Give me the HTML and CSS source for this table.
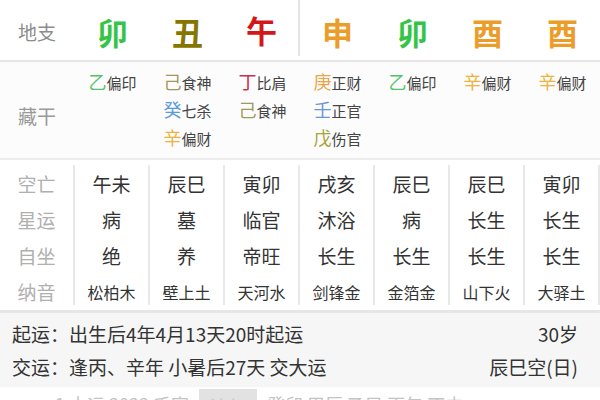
FILE: index.html
```html
<!DOCTYPE html>
<html lang="zh">
<head>
<meta charset="utf-8">
<link rel="stylesheet" href="styles.css">
</head>
<body>
<div class="page">
  <div class="row branches">
    <div class="label">地支</div>
    <div class="big green">卯</div>
    <div class="big olive">丑</div>
    <div class="big red split">午</div>
    <div class="big orange">申</div>
    <div class="big green">卯</div>
    <div class="big orange">酉</div>
    <div class="big orange">酉</div>
  </div>

  <div class="row hidden">
    <div class="label hidden-label">藏干</div>
    <div class="stems">
      <div class="stem"><span class="s s-yi">乙</span>偏印</div>
    </div>
    <div class="stems">
      <div class="stem"><span class="s s-ji">己</span>食神</div>
      <div class="stem"><span class="s s-gui">癸</span>七杀</div>
      <div class="stem"><span class="s s-xin">辛</span>偏财</div>
    </div>
    <div class="stems">
      <div class="stem"><span class="s s-ding">丁</span>比肩</div>
      <div class="stem"><span class="s s-ji">己</span>食神</div>
    </div>
    <div class="stems">
      <div class="stem"><span class="s s-geng">庚</span>正财</div>
      <div class="stem"><span class="s s-ren">壬</span>正官</div>
      <div class="stem"><span class="s s-wu">戊</span>伤官</div>
    </div>
    <div class="stems">
      <div class="stem"><span class="s s-yi">乙</span>偏印</div>
    </div>
    <div class="stems">
      <div class="stem"><span class="s s-xin">辛</span>偏财</div>
    </div>
    <div class="stems">
      <div class="stem"><span class="s s-xin">辛</span>偏财</div>
    </div>
  </div>

  <div class="row info">
    <div class="col labels">
      <div class="cell">空亡</div>
      <div class="cell">星运</div>
      <div class="cell">自坐</div>
      <div class="cell">纳音</div>
    </div>
    <div class="col"><div class="cell">午未</div><div class="cell">病</div><div class="cell">绝</div><div class="cell small">松柏木</div></div>
    <div class="col"><div class="cell">辰巳</div><div class="cell">墓</div><div class="cell">养</div><div class="cell small">壁上土</div></div>
    <div class="col"><div class="cell">寅卯</div><div class="cell">临官</div><div class="cell">帝旺</div><div class="cell small">天河水</div></div>
    <div class="col"><div class="cell">戌亥</div><div class="cell">沐浴</div><div class="cell">长生</div><div class="cell small">剑锋金</div></div>
    <div class="col"><div class="cell">辰巳</div><div class="cell">病</div><div class="cell">长生</div><div class="cell small">金箔金</div></div>
    <div class="col"><div class="cell">辰巳</div><div class="cell">长生</div><div class="cell">长生</div><div class="cell small">山下火</div></div>
    <div class="col"><div class="cell">寅卯</div><div class="cell">长生</div><div class="cell">长生</div><div class="cell small">大驿土</div></div>
  </div>

  <div class="luck">
    <div class="line"><span>起运：出生后4年4月13天20时起运</span><span>30岁</span></div>
    <div class="line"><span>交运：逢丙、辛年 小暑后27天 交大运</span><span>辰巳空(日)</span></div>
  </div>

  <div class="peek">
    <span class="peek-text">1 大运 2022 壬寅</span>
    <span class="peek-box">流年</span>
    <span class="peek-text">癸卯 甲辰 乙巳 丙午 丁未</span>
  </div>
</div>
</body>
</html>
```

FILE: styles.css
```css
* { box-sizing: border-box; }
html, body { margin: 0; padding: 0; }
body {
  width: 600px;
  height: 400px;
  overflow: hidden;
  background: #fff;
  font-family: "Noto Sans CJK SC", "Noto Sans", sans-serif;
  color: #333;
}
.page { width: 600px; }

.row {
  display: grid;
  grid-template-columns: repeat(8, 75px);
}

.label {
  font-size: 19px;
  color: #8c8c8c;
  padding-left: 18px;
  display: flex;
  align-items: center;
}

/* 地支 */
.branches {
  height: 62px;
  border-bottom: 2px solid #e6e6e6;
  align-items: stretch;
}
.branches .label { padding-top: 2px; }
.big {
  font-size: 31px;
  font-weight: 700;
  display: flex;
  align-items: center;
  justify-content: center;
  padding-top: 3px;
}
.split { border-right: 2px solid #e4e4e4; margin-bottom: 4px; }
.green { color: #35c447; }
.olive { color: #867600; }
.red { color: #d2161a; }
.orange { color: #ec9c28; }

/* 藏干 */
.hidden {
  height: 98px;
  background: #fcfcfc;
  border-bottom: 2px solid #ededed;
  align-items: start;
}
.hidden-label {
  color: #9a9a9a;
  align-self: stretch;
  padding-top: 10px;
}
.stems {
  display: flex;
  flex-direction: column;
  align-items: center;
  padding-top: 6px;
}
.stem {
  font-size: 15px;
  line-height: 27px;
  color: #444;
  white-space: nowrap;
}
.s { font-size: 18px; }
.s-yi { color: #55c468; }
.s-ji { color: #a09a5c; }
.s-gui { color: #5a9ad8; }
.s-xin { color: #f0b23e; }
.s-ding { color: #c4334f; }
.s-geng { color: #eaa64a; }
.s-ren { color: #6896d6; }
.s-wu { color: #a6a43a; }

/* 空亡 etc */
.info {
  height: 150px;
  align-items: start;
}
.col {
  margin-top: 5px;
  border-right: 2px solid #e8e8e8;
  padding-top: 1px;
  height: 140px;
  display: flex;
  flex-direction: column;
  align-items: center;
}
.cell {
  font-size: 19px;
  line-height: 36px;
  height: 36px;
  color: #333;
  white-space: nowrap;
}
.cell.small { font-size: 16px; }
.labels .cell { color: #b0b0b0; }

/* 起运 */
.luck {
  border-top: 3px solid #e6e6e6;
  background: #f6f6f6;
  padding: 4px 22px 4px 12px;
  height: 77px;
}
.line {
  display: flex;
  justify-content: space-between;
  font-size: 19px;
  line-height: 33px;
  color: #333;
}

/* bottom peek */
.peek {
  display: flex;
  align-items: flex-start;
  gap: 10px;
  padding-left: 55px;
  padding-top: 4px;
  font-size: 18px;
  color: #c4c4c4;
  white-space: nowrap;
}
.peek-box {
  background: #e2e2e2;
  color: #c8c8c8;
  width: 58px;
  height: 30px;
  margin-top: -2px;
  text-align: center;
  padding-top: 4px;
}
```
